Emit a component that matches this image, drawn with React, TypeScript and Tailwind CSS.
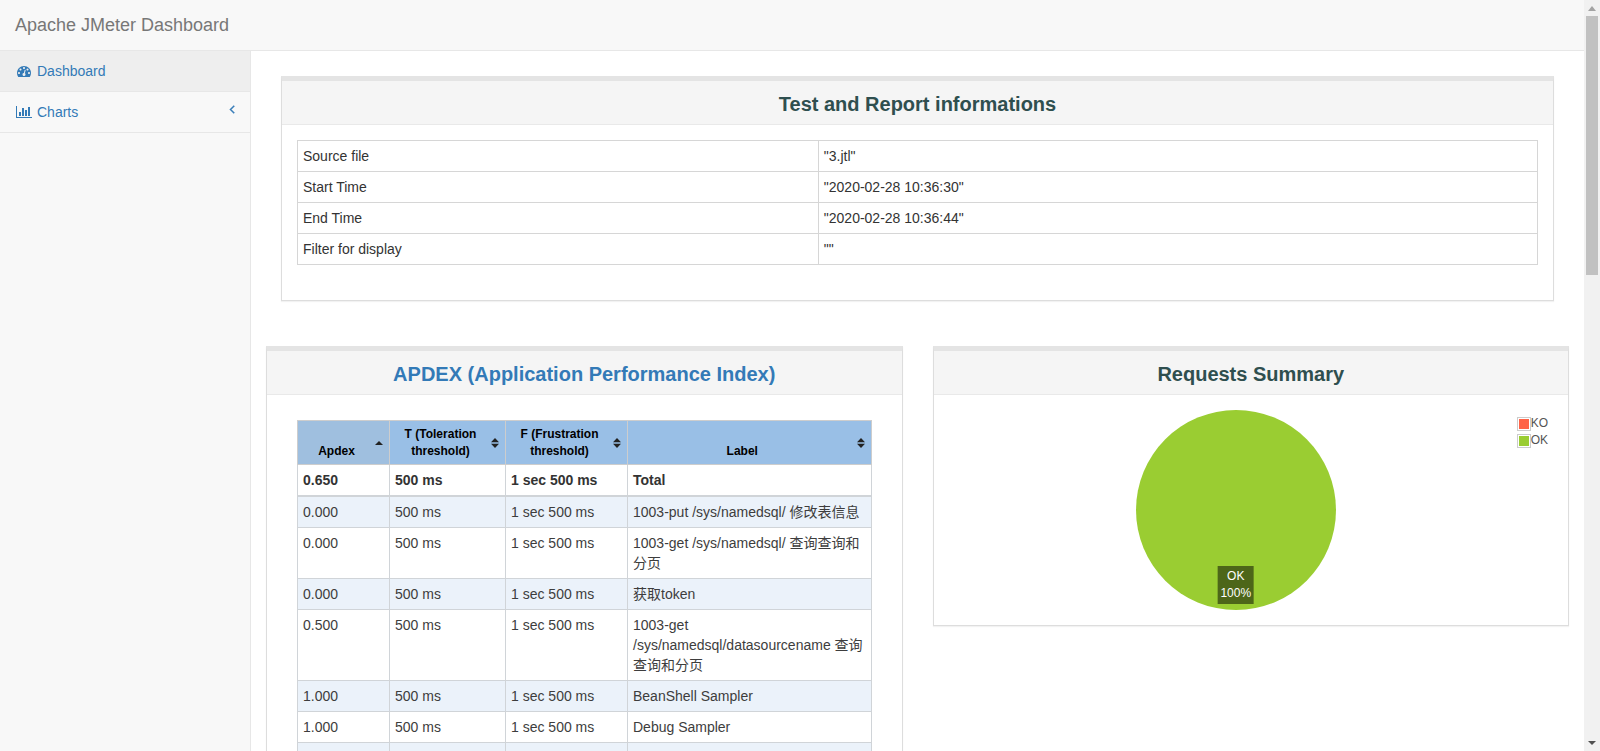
import type { ReactNode } from "react";
import clsx from "clsx";

const information = [
    ["Source file", '"3.jtl"'],
    ["Start Time", '"2020-02-28 10:36:30"'],
    ["End Time", '"2020-02-28 10:36:44"'],
    ["Filter for display", '""'],
];

const columns = [
    { title: "Apdex", sorted: true },
    { title: "T (Toleration threshold)", sorted: false },
    { title: "F (Frustration threshold)", sorted: false },
    { title: "Label", sorted: false },
];

const samples = [
    ["0.000", "500 ms", "1 sec 500 ms", "1003-put /sys/namedsql/ 修改表信息"],
    ["0.000", "500 ms", "1 sec 500 ms", "1003-get /sys/namedsql/ 查询查询和分页"],
    ["0.000", "500 ms", "1 sec 500 ms", "获取token"],
    ["0.500", "500 ms", "1 sec 500 ms", "1003-get /sys/namedsql/datasourcename 查询查询和分页"],
    ["1.000", "500 ms", "1 sec 500 ms", "BeanShell Sampler"],
    ["1.000", "500 ms", "1 sec 500 ms", "Debug Sampler"],
    ["", "", "", ""],
];

function DashboardIcon() {
    return (
        <svg className="h-[14px] w-4" viewBox="0 0 1792 1792" fill="currentColor" aria-hidden="true">
            <path d="M384 1152q0-53-37.5-90.5t-90.5-37.5-90.5 37.5-37.5 90.5 37.5 90.5 90.5 37.5 90.5-37.5 37.5-90.5zm192-448q0-53-37.5-90.5t-90.5-37.5-90.5 37.5-37.5 90.5 37.5 90.5 90.5 37.5 90.5-37.5 37.5-90.5zm428 481l101-382q6-26-7.5-48.5t-38.5-29.5-48 6.5-30 39.5l-101 382q-60 5-107 43.5t-63 98.5q-20 77 20 146t117 89 146-20 89-117q16-60-6-117t-72-91zm660-33q0-53-37.5-90.5t-90.5-37.5-90.5 37.5-37.5 90.5 37.5 90.5 90.5 37.5 90.5-37.5 37.5-90.5zm-640-640q0-53-37.5-90.5t-90.5-37.5-90.5 37.5-37.5 90.5 37.5 90.5 90.5 37.5 90.5-37.5 37.5-90.5zm448 192q0-53-37.5-90.5t-90.5-37.5-90.5 37.5-37.5 90.5 37.5 90.5 90.5 37.5 90.5-37.5 37.5-90.5zm320 448q0 261-141 483-19 29-54 29h-1402q-35 0-54-29-141-221-141-483 0-182 71-348t191-286 286-191 348-71 348 71 286 191 191 286 71 348z" />
        </svg>
    );
}

function ChartIcon() {
    return (
        <svg className="h-[14px] w-4" viewBox="0 0 2048 1792" fill="currentColor" aria-hidden="true">
            <path d="M640 896v512h-256v-512h256zm384-512v1024h-256v-1024h256zm1024 1152v128h-2048v-1536h128v1408h1920zm-640-896v768h-256v-768h256zm384-384v1152h-256v-1152h256z" />
        </svg>
    );
}

function AngleLeftIcon() {
    return (
        <svg className="size-[14px]" viewBox="0 0 1792 1792" fill="currentColor" stroke="currentColor" strokeWidth="60" aria-hidden="true">
            <path d="M1203 544q0 13-10 23l-393 393 393 393q10 10 10 23t-10 23l-50 50q-10 10-23 10t-23-10l-466-466q-10-10-10-23t10-23l466-466q10-10 23-10t23 10l50 50q10 10 10 23z" />
        </svg>
    );
}

function SortIcon({ sorted }: { sorted: boolean }) {
    return (
        <svg className="absolute right-[6px] top-1/2 h-[10px] w-2 -translate-y-1/2" viewBox="0 0 8 10" fill="#222" aria-hidden="true">
            {sorted ? <path d="M4 3l4 4H0z" /> : <path d="M4 0l4 4.3H0zM4 10l4-4.3H0z" />}
        </svg>
    );
}

function Panel({ title, children }: { title: ReactNode; children: ReactNode }) {
    return (
        <section className="border border-t-[5px] border-[#ddd] border-t-[#e4e4e4] bg-white shadow-[0_1px_1px_rgba(0,0,0,0.05)]">
            <h2 className="border-b border-[#e9e9e9] bg-[#f5f5f5] px-[15px] pb-2 pt-3 text-center text-[20px] font-bold leading-[23px] text-[#2f4f4f]">
                {title}
            </h2>
            <div className="p-[15px]">{children}</div>
        </section>
    );
}

function Sidebar() {
    return (
        <nav className="w-[251px] shrink-0 border-r border-[#e7e7e7] bg-[#f8f8f8]">
            <ul>
                <li className="border-b border-[#e7e7e7]">
                    <a href="#dashboard" className="flex items-center gap-[5px] bg-[#eee] py-[10px] pl-4 pr-[11px] text-[#337ab7]">
                        <DashboardIcon />
                        Dashboard
                    </a>
                </li>
                <li className="border-b border-[#e7e7e7]">
                    <a href="#charts" className="flex items-center gap-[5px] py-[10px] pl-4 pr-[11px] text-[#337ab7]">
                        <ChartIcon />
                        Charts
                        <span className="ml-auto self-start">
                            <AngleLeftIcon />
                        </span>
                    </a>
                </li>
            </ul>
        </nav>
    );
}

function InformationTable() {
    return (
        <table className="mb-5 w-full table-fixed border-collapse">
            <colgroup>
                <col className="w-[42%]" />
                <col />
            </colgroup>
            <tbody>
                {information.map(([name, value]) => (
                    <tr key={name}>
                        <td className="border border-[#d6d6d6] p-[5px]">{name}</td>
                        <td className="border border-[#d6d6d6] p-[5px]">{value}</td>
                    </tr>
                ))}
            </tbody>
        </table>
    );
}

function ApdexTable() {
    return (
        <div className="px-[15px] py-[10px]">
            <table className="w-full table-fixed border-collapse">
                <colgroup>
                    <col className="w-[92px]" />
                    <col className="w-[116px]" />
                    <col className="w-[122px]" />
                    <col />
                </colgroup>
                <thead>
                    <tr>
                        {columns.map(({ title, sorted }) => (
                            <th
                                key={title}
                                className={clsx(
                                    "relative border border-[#cdcdcd] pb-1 pl-[5px] pr-[19px] pt-[5px] align-bottom text-[12px] font-bold leading-[17px] text-black",
                                    sorted ? "bg-[#9fbfdf]" : "bg-[#99bfe6]"
                                )}
                            >
                                <button type="button" className="w-full align-bottom">{title}</button>
                                <SortIcon sorted={sorted} />
                            </th>
                        ))}
                    </tr>
                </thead>
                <tbody>
                    <tr className="font-bold">
                        {["0.650", "500 ms", "1 sec 500 ms", "Total"].map((cell) => (
                            <td key={cell} className="border border-[#d0d4d8] p-[5px]">{cell}</td>
                        ))}
                    </tr>
                </tbody>
                <tbody className="border-t-2 border-[#d0d4d8]">
                    {samples.map((cells, row) => (
                        <tr key={row} className="odd:bg-[#ebf2fa]">
                            {cells.map((cell, i) => (
                                <td key={i} className="h-[31px] border border-[#d0d4d8] p-[5px] align-top text-[#3d3d3d]">{cell}</td>
                            ))}
                        </tr>
                    ))}
                </tbody>
            </table>
        </div>
    );
}

function RequestsChart() {
    return (
        <div className="relative pr-[30px] text-[12px] leading-[17px]">
            <div className="relative mx-auto size-[200px] rounded-full bg-[#9acd32]">
                <div className="absolute bottom-[6px] left-1/2 -translate-x-1/2 bg-black/50 px-[3px] py-[2px] text-center text-white">
                    OK<br />100%
                </div>
            </div>
            <ul className="absolute right-[5px] top-[5px] text-[#545454]">
                <li className="flex items-center">
                    <span className="size-[14px] border border-[#ccc] bg-[#ff6347] bg-clip-content p-px" />
                    KO
                </li>
                <li className="flex items-center">
                    <span className="size-[14px] border border-[#ccc] bg-[#9acd32] bg-clip-content p-px" />
                    OK
                </li>
            </ul>
        </div>
    );
}

function Scrollbar() {
    return (
        <div className="flex w-4 shrink-0 flex-col items-center bg-[#f1f1f1]" aria-hidden="true">
            <svg className="size-4 shrink-0" viewBox="0 0 16 16">
                <path d="M8 6l4 5H4z" fill="#a3a3a3" />
            </svg>
            <div className="h-[34.5%] w-3 bg-[#c1c1c1]" />
            <svg className="mt-auto size-4 shrink-0" viewBox="0 0 16 16">
                <path d="M4 6h8l-4 4z" fill="#505050" />
            </svg>
        </div>
    );
}

export default function App() {
    return (
        <div className="flex h-screen overflow-hidden bg-white font-['Liberation_Sans','Noto_Sans_CJK_SC',sans-serif] text-[14px] leading-5 text-[#333]">
            <div className="flex min-w-0 flex-1 flex-col">
                <header className="border-b border-[#e7e7e7] bg-[#f8f8f8] p-[15px]">
                    <a href="#home" className="block text-[18px] leading-5 text-[#777]">Apache JMeter Dashboard</a>
                </header>
                <div className="flex min-h-0 flex-1">
                    <Sidebar />
                    <main className="min-w-0 flex-1 overflow-hidden px-[15px] pt-[25px]">
                        <div className="px-[15px]">
                            <Panel title="Test and Report informations">
                                <InformationTable />
                            </Panel>
                        </div>
                        <div className="mt-[45px] grid grid-cols-2 items-start gap-[30px]">
                            <Panel title={<a href="#apdex" className="text-[#337ab7]">APDEX (Application Performance Index)</a>}>
                                <ApdexTable />
                            </Panel>
                            <Panel title="Requests Summary">
                                <RequestsChart />
                            </Panel>
                        </div>
                    </main>
                </div>
            </div>
            <Scrollbar />
        </div>
    );
}
